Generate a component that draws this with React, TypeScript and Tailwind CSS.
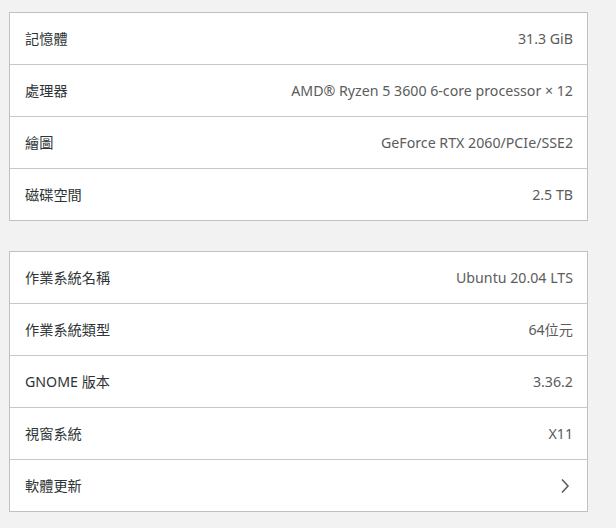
interface Row {
	label: string;
	value?: string;
	arrow?: boolean;
}

const hardware: Row[] = [
	{ label: '記憶體', value: '31.3 GiB' },
	{ label: '處理器', value: 'AMD® Ryzen 5 3600 6-core processor × 12' },
	{ label: '繪圖', value: 'GeForce RTX 2060/PCIe/SSE2' },
	{ label: '磁碟空間', value: '2.5 TB' },
];

const system: Row[] = [
	{ label: '作業系統名稱', value: 'Ubuntu 20.04 LTS' },
	{ label: '作業系統類型', value: '64位元' },
	{ label: 'GNOME 版本', value: '3.36.2' },
	{ label: '視窗系統', value: 'X11' },
	{ label: '軟體更新', arrow: true },
];

const Chevron = () => (
	<svg width="10" height="16" viewBox="0 0 10 16" className="mr-[3px] text-[#5e5e5e]">
		<path d="M2 1.5 L8 8 L2 14.5" fill="none" stroke="currentColor" strokeWidth="1.6" />
	</svg>
);

const Card = ({ rows }: { rows: Row[] }) => (
	<div className="border border-[#c0c0c0] bg-white">
		{rows.map((row, i) => (
			<div
				key={row.label}
				className={`flex h-[51px] items-center justify-between pl-[15px] pr-[14px] ${
					i > 0 ? 'box-content border-t border-[#c8c8c8]' : ''
				}`}
			>
				<span className="text-[#2e3436]">{row.label}</span>
				{row.arrow ? <Chevron /> : <span className="text-[#5c5c5c]">{row.value}</span>}
			</div>
		))}
	</div>
);

export default function App() {
	return (
		<div
			className="flex h-[528px] w-[616px] flex-col gap-[30px] bg-[#f2f2f2] pl-[9px] pr-[28px] pt-[12px] text-[14.2px]"
			style={{ fontFamily: '"Noto Sans", "Noto Sans CJK TC", sans-serif' }}
		>
			<Card rows={hardware} />
			<Card rows={system} />
		</div>
	);
}
